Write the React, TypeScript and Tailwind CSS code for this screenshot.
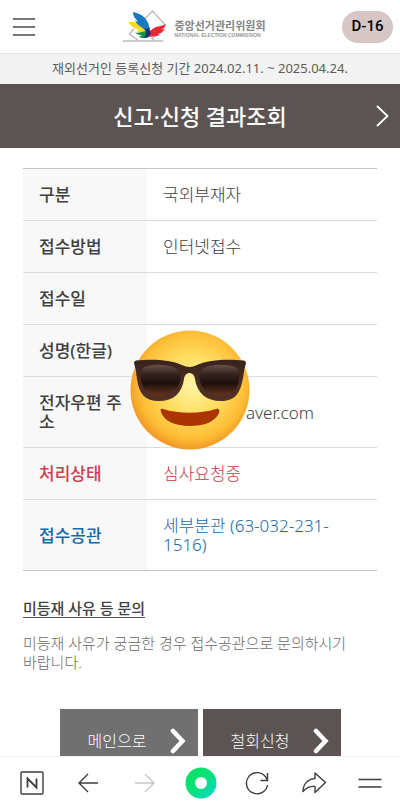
import type { ReactNode } from "react";

type Row = { label: string; value: string; tone?: "red" | "blue"; masked?: boolean };

const rows: Row[] = [
  { label: "구분", value: "국외부재자" },
  { label: "접수방법", value: "인터넷접수" },
  { label: "접수일", value: "" },
  { label: "성명(한글)", value: "" },
  { label: "전자우편 주소", value: "aver.com", masked: true },
  { label: "처리상태", value: "심사요청중", tone: "red" },
  { label: "접수공관", value: "세부분관 (63-032-231-1516)", tone: "blue" },
];

function labelTone(tone?: Row["tone"]) {
  if (tone === "red") return "text-[#cb3f4e]";
  if (tone === "blue") return "text-[#1668a8]";
  return "text-[#404040]";
}

function valueTone(tone?: Row["tone"]) {
  if (tone === "red") return "text-[#c63c4b]";
  if (tone === "blue") return "text-[#1668a8]";
  return "text-[#404040]";
}

function Emblem() {
  return (
    <svg viewBox="0 0 44 34" className="h-[34px] w-11" aria-hidden="true">
      <path d="M0 31H40.500M15.500 30.500L6.500 24L11 18.500M18 12.500L29.500 1L42 14.500L29 28.500L32 31" fill="none" stroke="#bcbcbc" strokeWidth="1.4" />
      <path d="M5.500 12C11 12 18 12 23 18L25 23C21 25 16 23.500 13 20C15 20.500 16 20 17 19.500C12 19 7.500 16.500 5.500 12Z" fill="#f3dc20" />
      <path d="M10 2C20 4 27 10 26.500 22L22 20.500C20 17 14 16 12 10C13 11 14 11.500 15 11.500C12 8.500 10 6 10 2Z" fill="#1878c0" />
      <path d="M12 22.500C16 23.500 21 21 25 21L27.500 26C25 28.500 19 28.500 16 27L19 25C16 25 14 24.500 12 22.500Z" fill="#159447" />
      <path d="M23.500 18C24 21 27 21.500 29 19.500C33 15.500 38 17 43 14C42 17.500 40 19 38 19.500C40 19.500 41 19 42 18.500C39 23.500 36 24 34 24L37 24.500C33 27.500 29 26 25.500 27Z" fill="#e72632" />
      <path d="M22 17.500C24 20 25 19 27 17C26 20 27 22 28 23C26 27.500 23 28 20 27.500C24 25.500 23 22 22 17.500Z" fill="#252d72" />
    </svg>
  );
}

function SunglassesFace() {
  return (
    <svg viewBox="0 0 120 120" className="size-[120px]" role="img" aria-label="선글라스를 쓴 얼굴">
      <defs>
        <radialGradient id="face" cx="0.52" cy="0.46" r="0.56">
          <stop offset="0" stopColor="#fff5a8" />
          <stop offset="0.45" stopColor="#ffdd60" />
          <stop offset="0.8" stopColor="#fdbd35" />
          <stop offset="1" stopColor="#ee9022" />
        </radialGradient>
        <linearGradient id="lens" x1="0" y1="0" x2="0" y2="1">
          <stop offset="0" stopColor="#6b5049" />
          <stop offset="0.3" stopColor="#36231e" />
          <stop offset="0.6" stopColor="#1d100c" />
          <stop offset="1" stopColor="#633620" />
        </linearGradient>
        <linearGradient id="frame" x1="0" y1="0" x2="0" y2="1">
          <stop offset="0" stopColor="#3a231d" />
          <stop offset="1" stopColor="#543126" />
        </linearGradient>
      </defs>
      <circle cx="60" cy="60" r="59.5" fill="url(#face)" />
      <path
        d="M6 30.500C20 29 40 29 52 35C57 37.500 62 37.500 67 35C79 29 100 29 114 30.500Q116 31 116 33L115 37C114 39 114 43 113 48C110 65 104 71 91 71C76 71 67 63 65 49C64 41 55 41 54 49C52 63 44 71 29 71C15 71 9 64 7 49C6 43 6 39 5 37L4 33Q4 31 6 30.500Z"
        fill="url(#frame)"
      />
      <path d="M13 38C22 33 41 34 48 40C53 44 50 56 44 61C37 67 23 67 17 62C10 56 9 42 13 38Z" fill="url(#lens)" />
      <path d="M71 40C79 34 98 33 107 38C111 42 110 56 103 62C97 67 83 67 76 61C70 56 67 44 71 40Z" fill="url(#lens)" />
      <path d="M33 79C49 84 70 84 86 79C89 78 90 80 89 83C85 92 74 96 60 96C45 96 34 91 31 82C30 79 31 78 33 79Z" fill="#ab3500" />
    </svg>
  );
}

function ThickChevron() {
  return (
    <svg viewBox="0 0 16 26" className="h-[26px] w-4" fill="none" stroke="#fff" strokeWidth="4.500" strokeLinecap="round" aria-hidden="true">
      <path d="M3 3L12.500 13L3 23" />
    </svg>
  );
}

function NavButton({ label, disabled, children }: { label: string; disabled?: boolean; children: ReactNode }) {
  return (
    <button type="button" aria-label={label} disabled={disabled} className="flex flex-1 items-center justify-center">
      {children}
    </button>
  );
}

const navIcon = "size-8 fill-none stroke-[#3c3d42] stroke-[1.4]";

export default function App() {
  return (
    <div className="flex h-screen flex-col bg-white font-['Noto_Sans','Noto_Sans_CJK_KR',sans-serif]">
      <div className="min-h-0 flex-1 overflow-y-auto [scrollbar-width:none]">
        <header className="flex h-[53px] items-center justify-between pr-[7px] pl-[13px]">
          <button type="button" aria-label="메뉴" className="flex w-[51px] flex-col gap-[6px]">
            <span className="h-[2px] w-[22px] bg-[#777]" />
            <span className="h-[2px] w-[22px] bg-[#777]" />
            <span className="h-[2px] w-[22px] bg-[#777]" />
          </button>
          <a href="#" className="flex items-center gap-[7px] pr-[17px]">
            <Emblem />
            <span className="flex flex-col pt-1 text-[#858585]">
              <span className="text-[11px] leading-[13px] font-bold">중앙선거관리위원회</span>
              <span className="font-['Liberation_Sans',sans-serif] text-[5px] leading-[6px] font-bold text-[#999]">NATIONAL ELECTION COMMISSION</span>
            </span>
          </a>
          <span className="flex h-8 w-[51px] items-center justify-center rounded-full bg-[#d6c6c6] font-['Roboto',sans-serif] text-[15px] font-medium text-black">
            D-16
          </span>
        </header>

        <p className="flex h-[31px] items-center justify-center border-t border-[#e2e2e2] bg-[#f3f3f3] text-[13px] text-[#5c5c5c]">
          재외선거인 등록신청 기간 2024.02.11. ~ 2025.04.24.
        </p>

        <div className="relative flex h-16 items-center justify-center bg-[#5b5453]">
          <h1 className="text-[22px] font-medium text-white">신고·신청 결과조회</h1>
          <button type="button" aria-label="다음" className="absolute right-[10px]">
            <svg viewBox="0 0 16 24" className="h-6 w-4" fill="none" stroke="#fff" strokeWidth="1.8">
              <path d="M3 2L13.500 12L3 22" />
            </svg>
          </button>
        </div>

        <main className="px-[22px] pt-5">
          <div className="relative px-px">
            <table className="w-full table-fixed border-collapse border-y border-[#c4c4c4] text-[17px] leading-[19px]">
              <colgroup>
                <col className="w-[124px]" />
                <col />
              </colgroup>
              <tbody>
                {rows.map((row) => (
                  <tr key={row.label} className="border-t border-[#dcdcdc] first:border-[#c4c4c4]">
                    <th scope="row" className={`bg-[#f8f8f8] px-4 py-4 text-left font-medium break-all ${labelTone(row.tone)}`}>
                      {row.label}
                    </th>
                    <td className={`py-4 pr-8 pl-4 font-light ${valueTone(row.tone)}`}>
                      <span className={row.masked ? "block pl-[83px]" : "block"}>{row.value}</span>
                    </td>
                  </tr>
                ))}
              </tbody>
            </table>
            <div className="absolute top-[162px] left-[108px]">
              <SunglassesFace />
            </div>
          </div>

          <h2 className="mx-px mt-7 w-fit border-b border-[#555] text-[15px] leading-[18px] font-medium text-[#404040]">미등재 사유 등 문의</h2>
          <p className="mx-px mt-4 text-[15px] leading-[19px] font-light break-keep text-[#6a6a6a]">미등재 사유가 궁금한 경우 접수공관으로 문의하시기 바랍니다.</p>

          <div className="mt-[37px] flex justify-center gap-[5px] text-base font-light text-white">
            <button type="button" className="flex h-[63px] w-[138px] items-center justify-between bg-[#707070] pr-3 pl-7">
              메인으로
              <ThickChevron />
            </button>
            <button type="button" className="flex h-[63px] w-[138px] items-center justify-between bg-[#5b5453] pr-3 pl-7">
              철회신청
              <ThickChevron />
            </button>
          </div>
        </main>
      </div>

      <nav className="flex h-[54px] shrink-0 border-t border-[#f0f2f3] bg-white pr-[2px] pb-[2px] pl-1">
        <NavButton label="네이버 홈">
          <svg viewBox="0 0 32 32" className={navIcon}>
            <rect x="5" y="5" width="22" height="22" rx="1" />
            <path d="M11.500 20.500V11.500L20.500 20.500V11.500" strokeWidth="1.8" />
          </svg>
        </NavButton>
        <NavButton label="뒤로">
          <svg viewBox="0 0 32 32" className={navIcon}>
            <path d="M26 16H7M16 7L7 16L16 25" />
          </svg>
        </NavButton>
        <NavButton label="앞으로" disabled>
          <svg viewBox="0 0 32 32" className="size-8 fill-none stroke-[#c8c8c8] stroke-[1.4]">
            <path d="M6 16H25M16 7L25 16L16 25" />
          </svg>
        </NavButton>
        <NavButton label="그린닷">
          <svg viewBox="0 0 32 32" className="size-8">
            <defs>
              <linearGradient id="dot" x1="0.3" y1="0.3" x2="1" y2="1">
                <stop offset="0" stopColor="#05e36c" />
                <stop offset="0.4" stopColor="#08df85" />
                <stop offset="1" stopColor="#0bd6df" />
              </linearGradient>
            </defs>
            <circle cx="16" cy="16" r="15.500" fill="url(#dot)" />
            <circle cx="16" cy="16" r="6" fill="#fff" />
          </svg>
        </NavButton>
        <NavButton label="새로고침">
          <svg viewBox="0 0 32 32" className={navIcon}>
            <path d="M26.500 18A10.600 10.600 0 1 1 25 10.500L26.500 13.500M26.500 6V13.500H19.500" />
          </svg>
        </NavButton>
        <NavButton label="공유">
          <svg viewBox="0 0 32 32" className={navIcon} strokeLinejoin="round">
            <path d="M17 6L27.500 15.500L17 25.500V19.500C12 19 8 21 5 24.500C5 17 10 12 17 11.500Z" />
          </svg>
        </NavButton>
        <NavButton label="더보기">
          <svg viewBox="0 0 32 32" className={navIcon}>
            <path d="M4.500 12.500H27.500M4.500 20H27.500" />
          </svg>
        </NavButton>
      </nav>
    </div>
  );
}
